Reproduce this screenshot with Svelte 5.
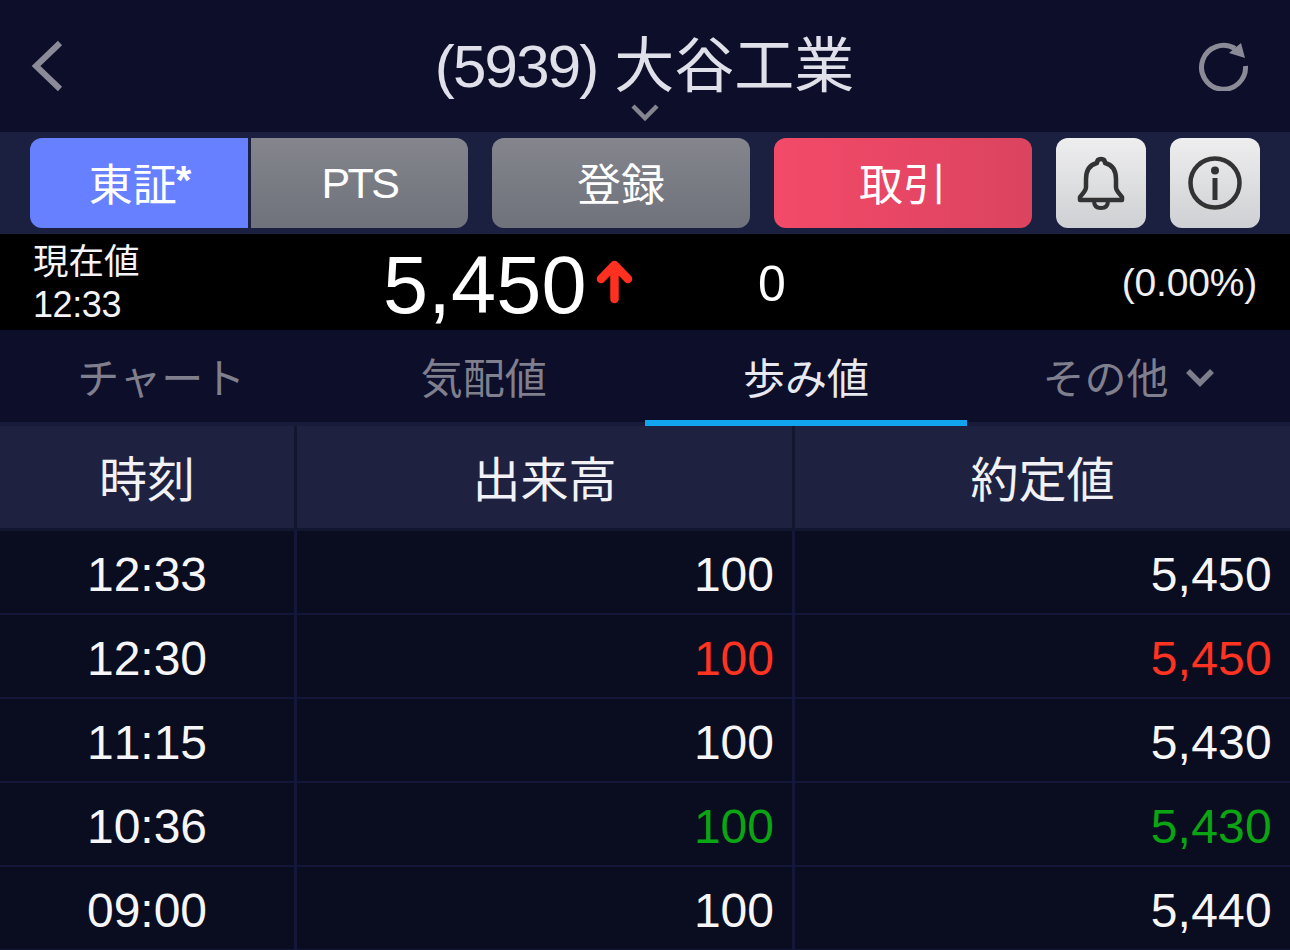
<script>
  const rows = [
    { t: '12:33', v: '100', p: '5,450', c: '' },
    { t: '12:30', v: '100', p: '5,450', c: 'red' },
    { t: '11:15', v: '100', p: '5,430', c: '' },
    { t: '10:36', v: '100', p: '5,430', c: 'green' },
    { t: '09:00', v: '100', p: '5,440', c: '' }
  ];
</script>

<div class="page">
  <header class="top">
    <svg class="back" width="34" height="52" viewBox="0 0 34 52"><path d="M29 3 L5 26 L29 49" fill="none" stroke="#8a8a98" stroke-width="6"/></svg>
    <h1 class="title"><span class="code">(5939)</span> <span class="cjk-title">大谷工業</span></h1>
    <svg class="caret" width="28" height="18" viewBox="0 0 28 18"><path d="M2 2 L14 14 L26 2" fill="none" stroke="#85858f" stroke-width="4.5"/></svg>
    <svg class="reload" width="52" height="52" viewBox="0 0 52 52">
      <path d="M37 9.5 A22 22 0 1 0 47.5 27" fill="none" stroke="#8b8b98" stroke-width="5"/>
      <path d="M31 14 L43 4 L47 19 Z" fill="#8b8b98"/>
    </svg>
  </header>

  <div class="toolbar">
    <div class="seg">
      <button class="btn on">東証<span class="star">*</span></button>
      <button class="btn gray right">PTS</button>
    </div>
    <button class="btn gray single">登録</button>
    <button class="btn trade">取引</button>
    <button class="btn icon" aria-label="通知">
      <svg width="48" height="54" viewBox="0 0 48 54">
        <path d="M24 3 C21 3 20 5 20 7 C12 9 9 15 9 23 L9 31 C9 35 6 37 3 41 L3 44 L45 44 L45 41 C42 37 39 35 39 31 L39 23 C39 15 36 9 28 7 C28 5 27 3 24 3 Z" fill="none" stroke="#333" stroke-width="4.5" stroke-linejoin="round"/>
        <path d="M17 45 C17 50 20 52 24 52 C28 52 31 50 31 45" fill="none" stroke="#333" stroke-width="4"/>
      </svg>
    </button>
    <button class="btn icon" aria-label="情報">
      <svg width="54" height="54" viewBox="0 0 54 54">
        <circle cx="27" cy="27" r="24.5" fill="none" stroke="#333" stroke-width="4.5"/>
        <circle cx="27" cy="14.5" r="4" fill="#333"/>
        <rect x="24.5" y="22" width="5" height="22" fill="#333"/>
      </svg>
    </button>
  </div>

  <section class="quote">
    <div class="label"><div class="name">現在値</div><div class="clock">12:33</div></div>
    <div class="price">5,450</div>
    <svg class="arrow" width="40" height="44" viewBox="0 0 40 44"><path d="M19.5 39 L19.5 5 M6 19 L19.5 5 L33 19" fill="none" stroke="#ff3020" stroke-width="8.5" stroke-linecap="round" stroke-linejoin="round"/></svg>
    <div class="change">0</div>
    <div class="pct">(0.00%)</div>
  </section>

  <nav class="tabs">
    <div class="tab">チャート</div>
    <div class="tab">気配値</div>
    <div class="tab active">歩み値</div>
    <div class="tab">その他<svg class="tabcaret" width="30" height="20" viewBox="0 0 30 20"><path d="M3 4 L15 16 L27 4" fill="none" stroke="#7d7d8b" stroke-width="5.5"/></svg></div>
  </nav>

  <div class="table">
    <div class="row head">
      <div class="cell">時刻</div>
      <div class="cell">出来高</div>
      <div class="cell">約定値</div>
    </div>
    {#each rows as r}
      <div class="row body">
        <div class="cell time">{r.t}</div>
        <div class="cell num {r.c}">{r.v}</div>
        <div class="cell num wide {r.c}">{r.p}</div>
      </div>
    {/each}
  </div>
</div>

<style>
  :global(body) { margin: 0; background: #0a0c1f; }
  .page {
    width: 1290px; height: 950px; overflow: hidden;
    font-family: "Liberation Sans", "Noto Sans CJK JP", sans-serif;
    font-kerning: none;
    color: #fff;
  }
  .top {
    position: relative; height: 132px; background: #0c0e2a;
    display: flex; justify-content: center; align-items: flex-start;
  }
  .title {
    margin: 33px 0 0 -1px; font-weight: 400; font-size: 60px; line-height: 68px;
    color: #e0e0ea;
  }
  .code { letter-spacing: -1.8px; }
  .cjk-title { letter-spacing: 0; }
  .back { position: absolute; left: 31px; top: 40px; }
  .caret { position: absolute; left: 631px; top: 104px; }
  .reload { position: absolute; left: 1198px; top: 39px; }

  .toolbar {
    height: 102px; box-sizing: border-box; padding: 6px 30px 6px;
    background: #1c2040; display: flex; gap: 24px;
  }
  .seg { display: flex; gap: 3px; }
  .btn {
    border: 0; margin: 0; padding: 0 0 2px; box-sizing: border-box; height: 90px; color: #fff; font: inherit;
    font-size: 44px; border-radius: 12px; display: flex; align-items: center; justify-content: center;
  }
  .star { font-size: 40px; font-weight: 700; margin-top: -4px; margin-left: -1px; letter-spacing: -2px; }
  .on { width: 218px; background: #6780ff; border-radius: 12px 0 0 12px; }
  .gray { background: linear-gradient(#84858d, #6f727b); }
  .right { width: 217px; border-radius: 0 12px 12px 0; font-size: 43px; letter-spacing: -2.5px; padding: 0; }
  .single { width: 258px; }
  .trade { width: 258px; background: linear-gradient(90deg, #f34a69, #db435f); }
  .icon { width: 90px; padding: 0; background: linear-gradient(#eeeeef, #cfd0d3); }

  .quote {
    position: relative; height: 96px; background: #000;
  }
  .label { position: absolute; left: 33px; top: 5px; font-size: 36px; line-height: 44px; color: #f4f4f8; }
  .name { font-size: 35.5px; padding-top: 2px; height: 42px; line-height: 42px; }
  .clock { letter-spacing: -0.4px; }
  .price { position: absolute; left: 383px; top: 5px; font-size: 81px; line-height: 92px; letter-spacing: 0.2px; }
  .arrow { position: absolute; left: 595px; top: 26px; }
  .change { position: absolute; left: 758px; top: 22px; font-size: 50px; line-height: 56px; }
  .pct { position: absolute; right: 33px; top: 26px; font-size: 39px; line-height: 46px; color: #f0f0f4; letter-spacing: -0.2px; }

  .tabs {
    height: 96px; box-sizing: border-box;
    background: linear-gradient(#0c0e2a 92px, #181b39 92px);
    display: grid; grid-template-columns: 322.5px 322.5px 322px 323px;
  }
  .tab {
    box-sizing: border-box; height: 96px;
    display: flex; align-items: center; justify-content: center;
    font-size: 42px; color: #7f7f8d;
    border-bottom: 6px solid transparent;
  }
  .tab.active { color: #e8e8f0; border-bottom-color: #12a5ef; }
  .tabcaret { margin-left: 16px; margin-top: 4px; }

  .row { display: grid; grid-template-columns: 294px 1fr 1fr; column-gap: 3px; }
  .head { height: 105px; background: #13162f; }
  .head .cell {
    box-sizing: border-box; height: 102px; padding-bottom: 2px; background: #1e2240; display: flex; align-items: center; justify-content: center;
    font-size: 48px; color: #f2f2f6;
  }
  .body { height: 84px; background: #14163a; box-sizing: border-box; }
  .body .cell {
    box-sizing: border-box; height: 82px; padding-top: 4px; background: #0a0c1f; display: flex; align-items: center; font-size: 48px; color: #f6f6f8;
  }
  .time { justify-content: center; }
  .num { justify-content: flex-end; padding-right: 18px; }
  .wide { letter-spacing: 0.25px; }
  .red { color: #ff3322 !important; }
  .green { color: #0aa512 !important; }
</style>
